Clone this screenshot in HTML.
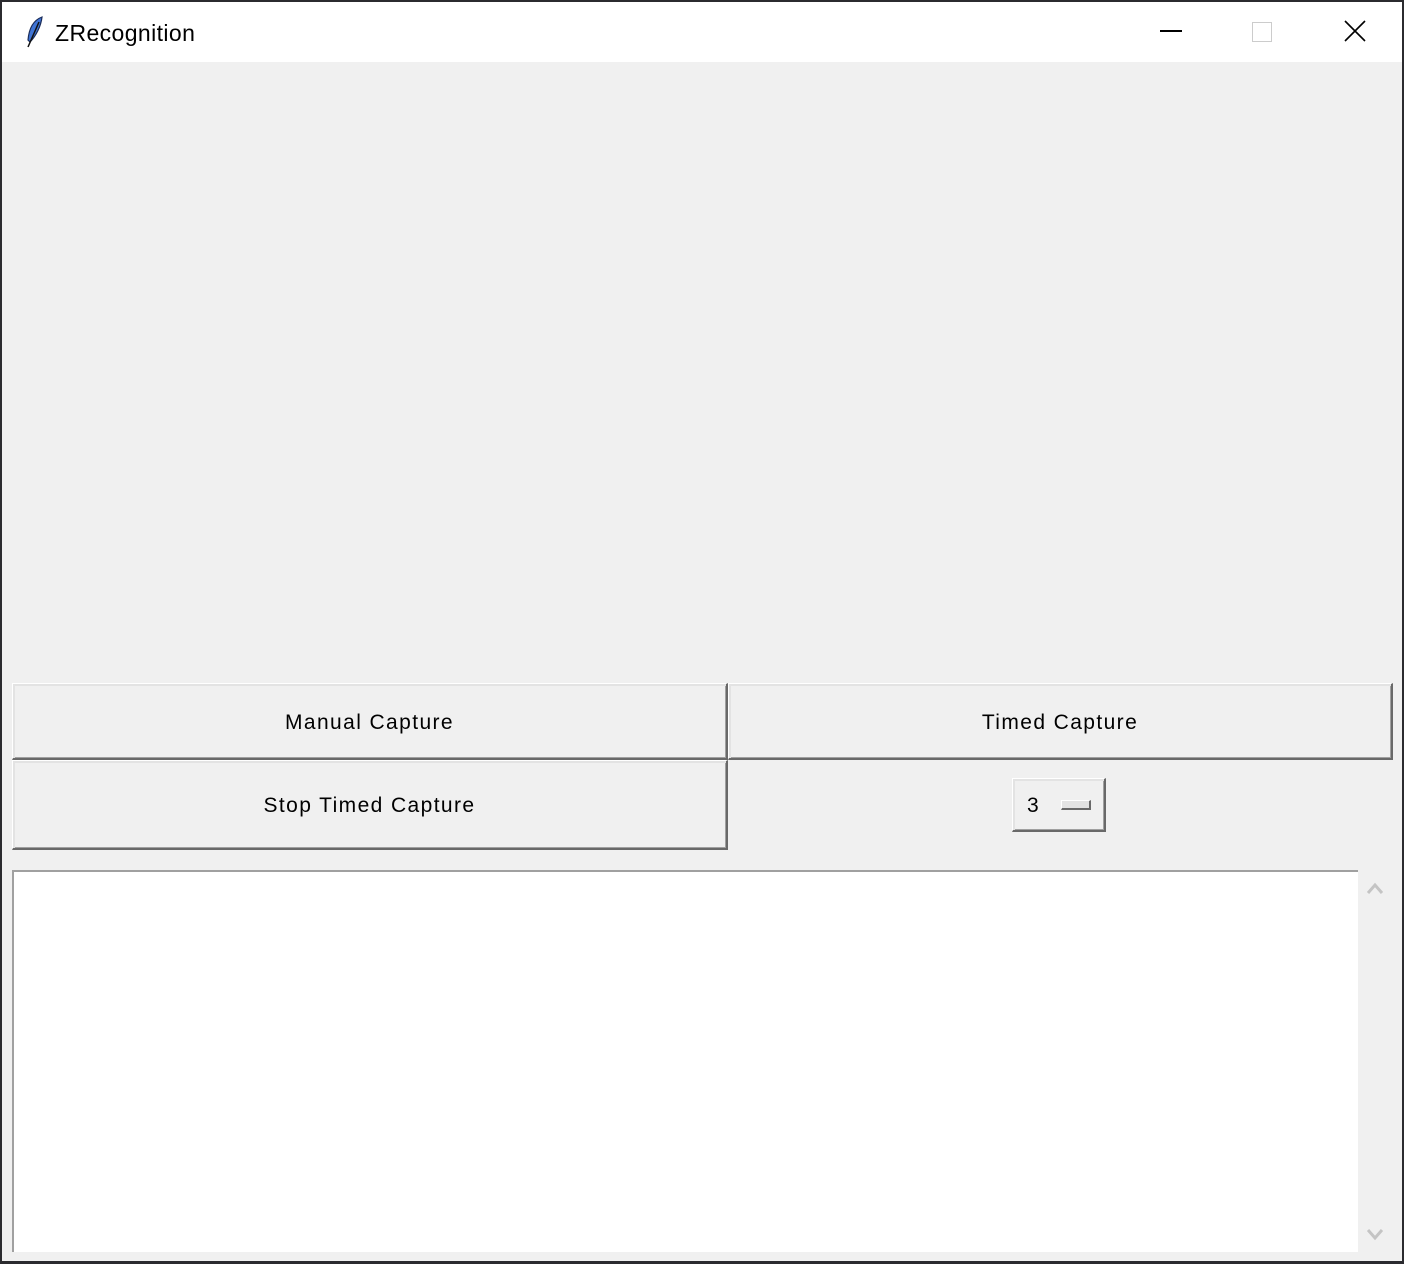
<!DOCTYPE html>
<html><head><style>
*{margin:0;padding:0;box-sizing:border-box}
body{width:1404px;height:1264px;background:#2b2b2f;position:relative;overflow:hidden;font-family:"Liberation Sans",sans-serif}
.win{position:absolute;left:2px;top:2px;width:1400px;height:1259px;background:#f0f0f0}
.title{position:absolute;left:0;top:0;width:1400px;height:60px;background:#fff}
.title span{position:absolute;left:53px;top:18px;font-size:23px;letter-spacing:0.4px;color:#000}
.btn{position:absolute;background:#f0f0f0;border-top:1px solid #fff;border-left:1px solid #fff;border-right:2px solid #696969;border-bottom:2px solid #696969;box-shadow:inset 2px 2px 0 #e3e3e3,inset -1px -1px 0 #a0a0a0;display:flex;align-items:center;justify-content:center;font-size:21px;color:#000;letter-spacing:1.4px;padding-top:3px}
.txt{position:absolute;left:12px;top:870px;width:1346px;height:382px;background:#fff;border-top:2px solid #a0a0a0;border-left:2px solid #a0a0a0}
</style></head><body>
<div class="win">
<div class="title">
<svg style="position:absolute;left:22px;top:14px" width="22" height="34" viewBox="0 0 22 34"><path d="M18 1 C10 4 5 12 4 24 L6 26 C12 20 17 10 18 1Z" fill="#3f74d6" stroke="#1b2d5a" stroke-width="1.2"/><path d="M15 6 L4 31" stroke="#111" stroke-width="1.5"/></svg>
<span>ZRecognition</span>
<div style="position:absolute;left:1158px;top:28px;width:22px;height:2px;background:#000"></div>
<div style="position:absolute;left:1250px;top:20px;width:20px;height:20px;border:1px solid #ccc"></div>
<svg style="position:absolute;left:1342px;top:18px" width="22" height="22"><path d="M1 1L21 21M21 1L1 21" stroke="#000" stroke-width="1.6"/></svg>
</div>
</div>
<div class="btn" style="left:12px;top:683px;width:716px;height:77px">Manual Capture</div>
<div class="btn" style="left:728px;top:683px;width:665px;height:77px">Timed Capture</div>
<div class="btn" style="left:12px;top:760px;width:716px;height:90px">Stop Timed Capture</div>
<div class="btn" style="left:1012px;top:778px;width:94px;height:54px;justify-content:flex-start;padding-left:14px">3
<div style="position:absolute;left:48px;top:21px;width:30px;height:10px;background:#e3e3e3;border-top:1px solid #fff;border-left:1px solid #fff;border-right:2px solid #696969;border-bottom:2px solid #696969"></div></div>
<div class="txt"></div>
<svg style="position:absolute;left:1367px;top:881px" width="16" height="14"><path d="M1 12L8 4L15 12" stroke="#c4c4c4" stroke-width="3" fill="none"/></svg>
<svg style="position:absolute;left:1367px;top:1228px" width="16" height="14"><path d="M1 2L8 10L15 2" stroke="#c4c4c4" stroke-width="3" fill="none"/></svg>
</body></html>
